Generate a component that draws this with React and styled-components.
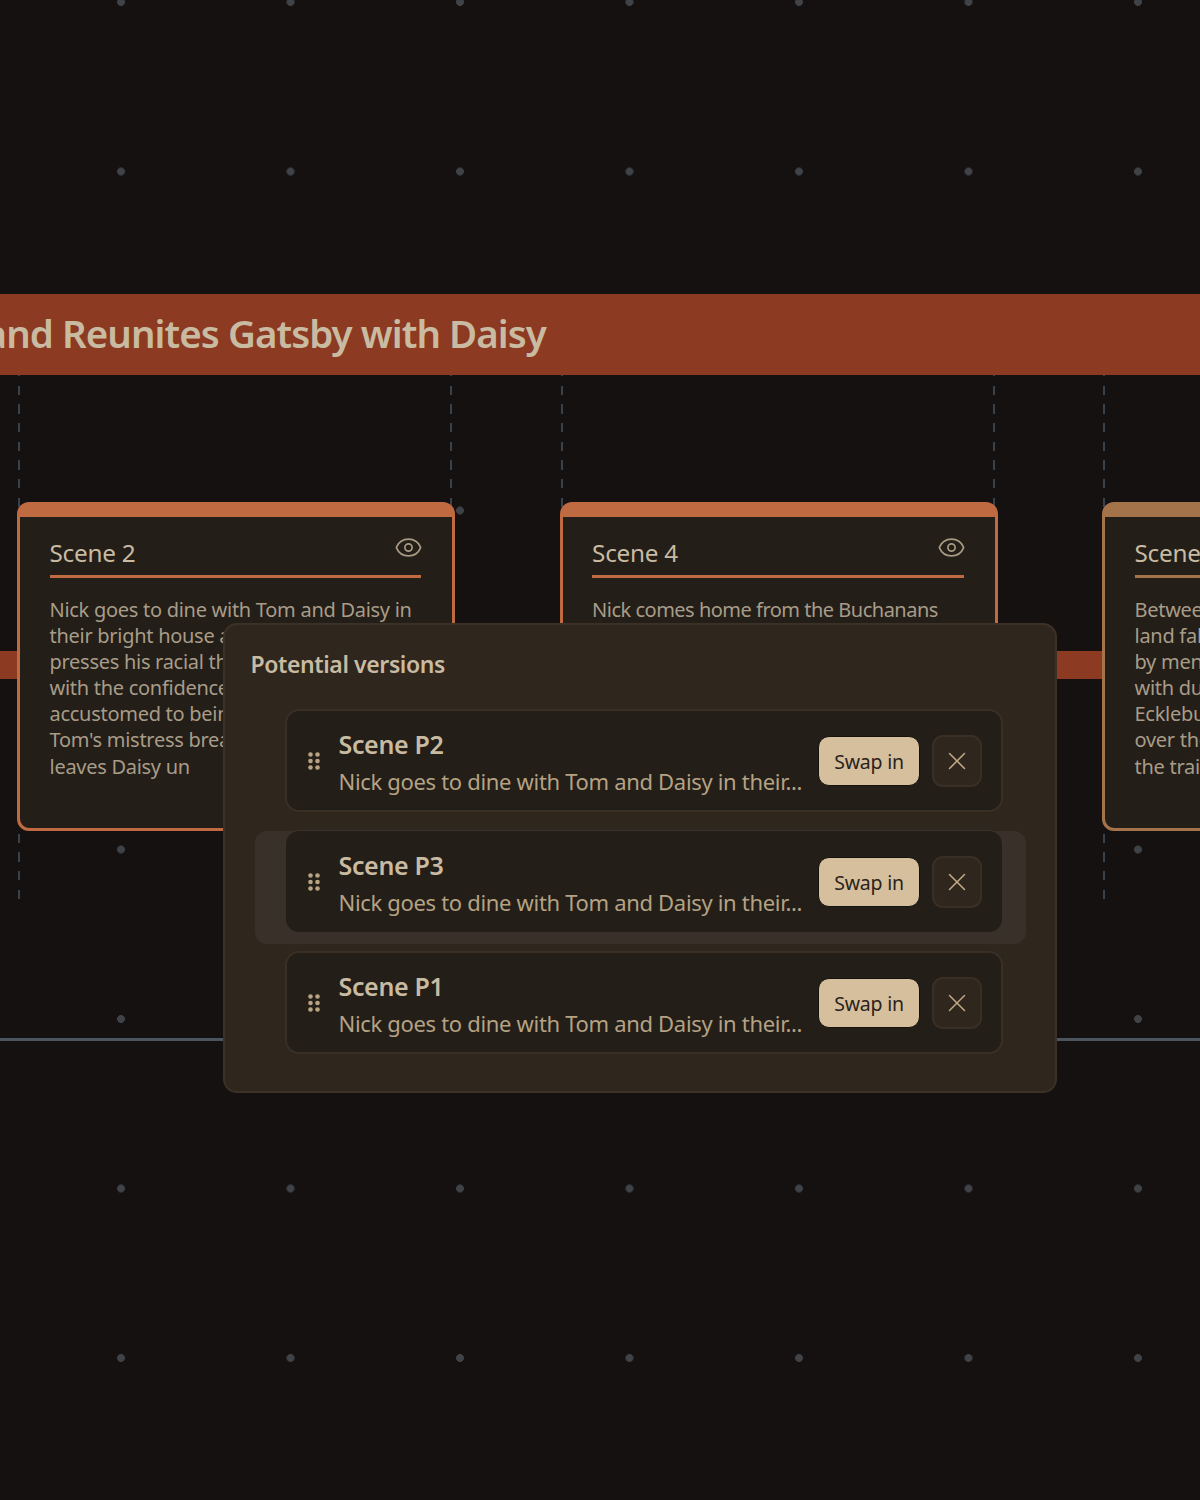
import React from "react";
import styled, { createGlobalStyle } from "styled-components";
import { Eye, X } from "lucide-react";

const GlobalStyle = createGlobalStyle`
  html, body {
    margin: 0;
    padding: 0;
    background: #141110;
  }
  body {
    font-family: "Noto Sans", "Open Sans", sans-serif;
  }
`;

const Canvas = styled.div`
  position: relative;
  width: 1200px;
  height: 1500px;
  overflow: hidden;
  background-color: #141110;
  background-image: radial-gradient(circle, #3f4348 3.6px, transparent 4.2px);
  background-size: 169.5px 169.5px;
  background-position: 36.25px 86.75px;
`;

const ActBanner = styled.div`
  position: absolute;
  right: 0;
  top: 294px;
  width: 1700px;
  height: 81px;
  display: flex;
  align-items: center;
  justify-content: flex-end;
  padding: 0 654px 3px 0;
  box-sizing: border-box;
  background: #8c3a21;
  color: #c9bba2;
  font-size: 38.5px;
  font-weight: 600;
  letter-spacing: -0.95px;
  white-space: nowrap;
`;

const SequenceBar = styled.div`
  position: absolute;
  left: 0;
  top: 651px;
  width: 1200px;
  height: 28px;
  background: #8c3a21;
`;

const TimeLine = styled.div`
  position: absolute;
  left: 0;
  top: 1038px;
  width: 1200px;
  height: 3px;
  background: #4a5560;
`;

const DashedGuide = styled.div`
  position: absolute;
  left: ${(p) => p.$left}px;
  top: 367.3px;
  width: 2px;
  height: 532px;
  background: repeating-linear-gradient(
    to bottom,
    #38424c 0,
    #38424c 9.3px,
    transparent 9.3px,
    transparent 18.67px
  );
`;

const SceneCard = styled.article`
  position: absolute;
  left: ${(p) => p.$left}px;
  top: 502px;
  width: 438px;
  height: 329px;
  box-sizing: border-box;
  background: #231e18;
  border: 3.5px solid ${(p) => p.$accent};
  border-top-width: 15px;
  border-radius: 12px;
  padding: 14px 31px 0 29.5px;
  overflow: hidden;
`;

const CardHeader = styled.header`
  position: relative;
  height: 42px;
  padding-bottom: 2px;
  display: flex;
  align-items: center;
  border-bottom: 3.5px solid ${(p) => p.$accent};
`;

const CardTitle = styled.h3`
  margin: 0;
  font-size: 24.3px;
  font-weight: 400;
  letter-spacing: -0.25px;
  color: #c9bba2;
`;

const EyeButton = styled.span`
  position: absolute;
  right: -2px;
  top: 2px;
  display: flex;
  color: #a89a82;
`;

const CardBody = styled.div`
  margin-top: 19px;
  font-size: 20px;
  line-height: 26.1px;
  letter-spacing: ${(p) => p.$tracking}px;
  color: #a89c88;
  white-space: nowrap;
`;

const BodyLine = styled.div``;

const Dialog = styled.section`
  position: absolute;
  left: 223px;
  top: 623px;
  width: 834px;
  height: 470px;
  box-sizing: border-box;
  background: #2f261e;
  border: 2px solid #3c3126;
  border-radius: 14px;
  padding: 23px 0 0 25.5px;
`;

const DialogTitle = styled.h2`
  margin: 0 0 29px;
  height: 32px;
  line-height: 32px;
  font-size: 23px;
  font-weight: 600;
  letter-spacing: -0.4px;
  color: #c9bba2;
`;

const VersionList = styled.div`
  display: flex;
  flex-direction: column;
  gap: 18px;
  margin-left: 34.5px;
  width: 718px;
`;

const VersionRow = styled.div`
  position: relative;
  z-index: 0;
  height: 103px;
  box-sizing: border-box;
  display: flex;
  align-items: center;
  background: #231e18;
  border: 2px solid ${(p) => (p.$active ? "#393029" : "#3a2f25")};
  border-radius: 14px;
  padding: 0 19px 0 20px;

  ${(p) =>
    p.$active &&
    `
    &::before {
      content: "";
      position: absolute;
      z-index: -2;
      left: -32px;
      right: -25px;
      top: -1px;
      bottom: -13px;
      border-radius: 12px;
      background: #393029;
    }
    &::after {
      content: "";
      position: absolute;
      z-index: -1;
      inset: -1px;
      border-radius: 13px;
      background: #231e18;
    }
  `}
`;

const GripIcon = styled.svg`
  flex: none;
  width: 14px;
  height: 20px;
  color: #b8a382;
`;

const VersionText = styled.div`
  flex: 1;
  min-width: 0;
  margin-left: 17.5px;
  padding-top: 3px;
`;

const VersionTitle = styled.div`
  height: 36px;
  line-height: 36px;
  font-size: 25px;
  font-weight: 600;
  letter-spacing: -0.35px;
  color: #c9bba2;
`;

const VersionSummary = styled.div`
  margin-top: 1px;
  height: 36px;
  line-height: 36px;
  font-size: 22px;
  letter-spacing: -0.32px;
  color: #b5a284;
  white-space: nowrap;
`;

const SwapButton = styled.button`
  flex: none;
  width: 102px;
  height: 50px;
  box-sizing: border-box;
  border: 1px solid #14110e;
  border-radius: 11px;
  background: #d6bf9c;
  color: #2a231b;
  font-family: inherit;
  font-size: 19.5px;
  letter-spacing: -0.2px;
  padding: 2px 0 0;
`;

const RemoveButton = styled.button`
  flex: none;
  width: 50px;
  height: 52px;
  margin-left: 12px;
  box-sizing: border-box;
  display: flex;
  align-items: center;
  justify-content: center;
  border: 2px solid #3a2f25;
  border-radius: 11px;
  background: #2f261e;
  color: #c2aa88;
  padding: 0;
`;

const guides = [18, 450, 561, 993, 1103];

const cards = [
  {
    left: 17,
    accent: "#c06a42",
    title: "Scene 2",
    tracking: -0.28,
    lines: [
      "Nick goes to dine with Tom and Daisy in",
      "their bright house and Tom",
      "presses his racial theories",
      "with the confidence of a man",
      "accustomed to being heard.",
      "Tom's mistress breaks the calm",
      "leaves Daisy un",
    ],
  },
  {
    left: 559.6,
    accent: "#c06a42",
    title: "Scene 4",
    tracking: -0.5,
    lines: ["Nick comes home from the Buchanans"],
  },
  {
    left: 1102,
    accent: "#a5734a",
    title: "Scene 3",
    tracking: -0.28,
    lines: [
      "Between West Egg and the city",
      "land falls away, worked over",
      "by men moving",
      "with dust under the eyes of",
      "Eckleburg, which look out",
      "over the valley of ashes as",
      "the train passes.",
    ],
  },
];

const versions = [
  { id: "P2", active: false },
  { id: "P3", active: true },
  { id: "P1", active: false },
];

const Grip = () => (
  <GripIcon viewBox="0 0 14 20" fill="currentColor">
    <circle cx="3.5" cy="3.5" r="2.3" />
    <circle cx="10.5" cy="3.5" r="2.3" />
    <circle cx="3.5" cy="10" r="2.3" />
    <circle cx="10.5" cy="10" r="2.3" />
    <circle cx="3.5" cy="16.5" r="2.3" />
    <circle cx="10.5" cy="16.5" r="2.3" />
  </GripIcon>
);

const App = () => (
  <>
    <GlobalStyle />
    <Canvas>
      {guides.map((left) => (
        <DashedGuide key={left} $left={left} />
      ))}
      <ActBanner>Nick Invites Everyone Over and Reunites Gatsby with Daisy</ActBanner>
      <SequenceBar />
      <TimeLine />
      {cards.map((card) => (
        <SceneCard key={card.title} $left={card.left} $accent={card.accent}>
          <CardHeader $accent={card.accent}>
            <CardTitle>{card.title}</CardTitle>
            {card.accent === "#c06a42" && (
              <EyeButton>
                <Eye size={29} strokeWidth={1.4} />
              </EyeButton>
            )}
          </CardHeader>
          <CardBody $tracking={card.tracking}>
            {card.lines.map((line) => (
              <BodyLine key={line}>{line}</BodyLine>
            ))}
          </CardBody>
        </SceneCard>
      ))}
      <Dialog>
        <DialogTitle>Potential versions</DialogTitle>
        <VersionList>
          {versions.map((version) => (
            <VersionRow key={version.id} $active={version.active}>
              <Grip />
              <VersionText>
                <VersionTitle>Scene {version.id}</VersionTitle>
                <VersionSummary>Nick goes to dine with Tom and Daisy in their...</VersionSummary>
              </VersionText>
              <SwapButton>Swap in</SwapButton>
              <RemoveButton>
                <X size={30} strokeWidth={1.2} />
              </RemoveButton>
            </VersionRow>
          ))}
        </VersionList>
      </Dialog>
    </Canvas>
  </>
);

export default App;
